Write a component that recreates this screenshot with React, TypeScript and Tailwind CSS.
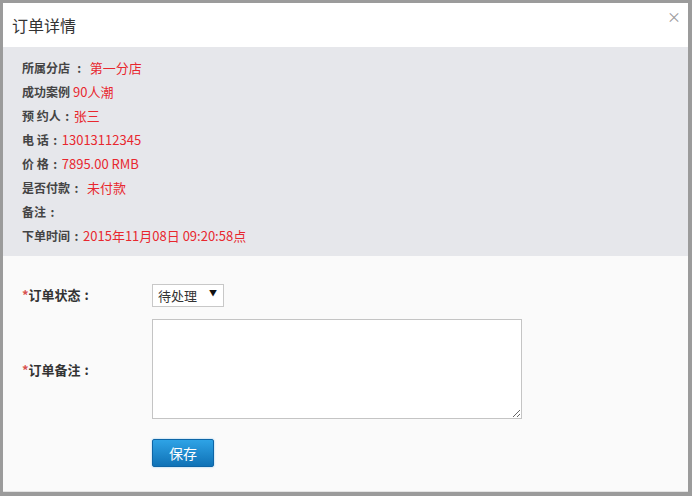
const infoRows: { label: string; value: string; colon?: boolean; gap?: boolean }[] = [
  { label: "所属分店", value: "第一分店", colon: true, gap: true },
  { label: "成功案例", value: "90人潮" },
  { label: "预 约人", value: "张三", colon: true },
  { label: "电 话", value: "13013112345", colon: true },
  { label: "价 格", value: "7895.00 RMB", colon: true },
  { label: "是否付款", value: "未付款", colon: true, gap: true },
  { label: "备注", value: "", colon: true },
  { label: "下单时间", value: "2015年11月08日 09:20:58点", colon: true },
];

function Colon() {
  return <span className="inline-block w-[13px] text-center">:</span>;
}

export default function App() {
  return (
    <div
      className="h-[496px] w-[692px] overflow-hidden bg-[#9b9b9b] pt-[3px] pl-[3px] pr-[4px]"
      style={{ fontFamily: '"Noto Sans CJK SC", "Liberation Sans", sans-serif' }}
    >
      <div className="flex h-[489px] flex-col border-b border-[#e3e3e3] bg-white">
        <div className="flex h-[44px] items-center justify-between pl-[9px] pr-[7px]">
          <h3 className="text-[16px] text-[#333]">订单详情</h3>
          <span className="mb-[18px] text-[14px] leading-none text-[#9a9a9a]">×</span>
        </div>

        <div className="bg-[#e6e7eb] px-[19px] pt-[9px] pb-[8px]">
          {infoRows.map((row) => (
            <div key={row.label} className="flex items-center leading-[24px]">
              <span className="text-[12px] font-bold text-[#444]">
                {row.label}
                {row.gap && row.label === "所属分店" && " "}
                {row.colon && <Colon />}
              </span>
              <span className={`text-[13px] text-[#e8272f] ${row.gap ? "ml-[4px]" : row.colon ? "ml-0" : "ml-[3px]"}`}>
                {row.value}
              </span>
            </div>
          ))}
        </div>

        <div className="flex-1 bg-[#fafafa] px-[19px] pt-[26px]">
          <div className="flex items-center">
            <label className="w-[130px] text-[13px] font-bold text-[#333]">
              <span className="text-[#d9534f]">*</span>订单状态
              <span className="ml-[4px]">:</span>
            </label>
            <div className="relative">
              <select className="h-[23px] w-[72px] appearance-none border border-[#c8c8c8] bg-white pl-[5px] text-[13px] text-[#333] outline-none">
                <option>待处理</option>
                <option>已处理</option>
              </select>
              <span className="pointer-events-none absolute right-[7px] top-[5px] text-[8px] text-[#111]">▼</span>
            </div>
          </div>

          <div className="mt-[12px] flex items-center">
            <label className="w-[130px] text-[13px] font-bold text-[#333]">
              <span className="text-[#d9534f]">*</span>订单备注
              <span className="ml-[4px]">:</span>
            </label>
            <textarea className="h-[100px] w-[370px] resize border border-[#c4c4c4] bg-white outline-none" />
          </div>

          <div className="mt-[20px] pl-[130px]">
            <button className="h-[28px] w-[62px] rounded-[2px] border border-[#0d65a6] bg-gradient-to-b from-[#2ea3e6] to-[#0f72b6] text-[14px] text-white shadow-[0_0_2px_rgba(60,160,230,0.6)]">
              保存
            </button>
          </div>
        </div>
      </div>
    </div>
  );
}
